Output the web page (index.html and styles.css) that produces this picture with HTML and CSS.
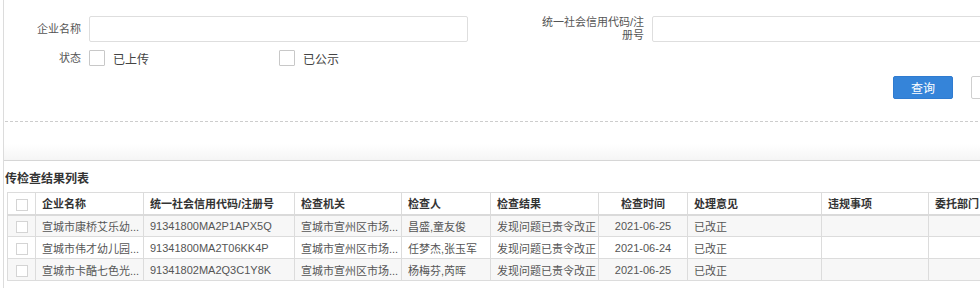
FILE: index.html
```html
<!DOCTYPE html>
<html lang="zh-CN">
  <head>
    <meta charset="UTF-8" />
    <title>检查结果列表</title>
    <link rel="stylesheet" href="styles.css">
  </head>
  <body>
    <div class="page">
      <div class="search-panel">
        <div class="form-grid">
          <label class="form-label">企业名称</label>
          <input class="form-input" type="text" />
          <span></span>
          <label class="form-label two-line">统一社会信用代码/注册号</label>
          <input class="form-input" type="text" />

          <label class="form-label">状态</label>
          <div class="check-group">
            <span class="check-item"><i class="check-box"></i>已上传</span>
            <span class="check-item"><i class="check-box"></i>已公示</span>
          </div>
        </div>

        <div class="toolbar">
          <button class="btn btn-primary">查询</button>
          <button class="btn" aria-label="重置"></button>
        </div>

        <div class="dashed"></div>
      </div>

      <div class="list-title">传检查结果列表</div>

      <div class="table-wrap">
        <table class="grid">
          <colgroup>
            <col style="width:28px">
            <col style="width:108px">
            <col style="width:151px">
            <col style="width:107px">
            <col style="width:89px">
            <col style="width:108px">
            <col style="width:89px">
            <col style="width:134px">
            <col style="width:107px">
            <col style="width:108px">
          </colgroup>
          <thead>
            <tr>
              <th class="cb"><i class="row-check"></i></th>
              <th>企业名称</th>
              <th>统一社会信用代码/注册号</th>
              <th>检查机关</th>
              <th>检查人</th>
              <th>检查结果</th>
              <th class="center">检查时间</th>
              <th>处理意见</th>
              <th>违规事项</th>
              <th>委托部门</th>
            </tr>
          </thead>
          <tbody>
            <tr class="odd">
              <td class="cb"><i class="row-check"></i></td>
              <td>宣城市康桥艾乐幼...</td>
              <td>91341800MA2P1APX5Q</td>
              <td>宣城市宣州区市场...</td>
              <td>昌盛,童友俊</td>
              <td>发现问题已责令改正</td>
              <td class="center">2021-06-25</td>
              <td>已改正</td>
              <td></td>
              <td></td>
            </tr>
            <tr>
              <td class="cb"><i class="row-check"></i></td>
              <td>宣城市伟才幼儿园...</td>
              <td>91341800MA2T06KK4P</td>
              <td>宣城市宣州区市场...</td>
              <td>任梦杰,张玉军</td>
              <td>发现问题已责令改正</td>
              <td class="center">2021-06-24</td>
              <td>已改正</td>
              <td></td>
              <td></td>
            </tr>
            <tr class="odd">
              <td class="cb"><i class="row-check"></i></td>
              <td>宣城市卡酷七色光...</td>
              <td>91341802MA2Q3C1Y8K</td>
              <td>宣城市宣州区市场...</td>
              <td>杨梅芬,芮晖</td>
              <td>发现问题已责令改正</td>
              <td class="center">2021-06-25</td>
              <td>已改正</td>
              <td></td>
              <td></td>
            </tr>
          </tbody>
        </table>
      </div>
    </div>
  </body>
</html>
```

FILE: styles.css
```css
* {
  margin: 0;
  padding: 0;
  box-sizing: border-box;
  font-family: "Liberation Sans", "Noto Sans CJK SC", sans-serif;
}
body {
  background: #fff;
  overflow: hidden;
  font-size: 11px;
  color: #555;
}

.page {
  width: 1100px;
  min-height: 288px;
  margin-left: 3px;
  border-left: 1px solid #dcdcdc;
}

.search-panel {
  height: 161px;
  padding-top: 16px;
  border-bottom: 1px solid #d6d6d6;
  background: linear-gradient(to bottom, #fff 0%, #fff 90%, #f5f5f5 100%);
}

.form-grid {
  display: grid;
  grid-template-columns: 77px 379px 50px 110px 340px;
  column-gap: 8px;
  row-gap: 8px;
  align-items: center;
}
.form-label {
  text-align: right;
  color: #555;
  line-height: 13px;
}
.form-input {
  height: 26px;
  border: 1px solid #dedede;
  border-radius: 2px;
  outline: none;
  background: #fff;
}
.check-group {
  grid-column: 2 / 6;
  display: flex;
  height: 16px;
}
.check-item {
  width: 190px;
  display: flex;
  align-items: center;
  gap: 8px;
  font-size: 12px;
  color: #444;
}
.check-box {
  width: 16px;
  height: 16px;
  border: 1px solid #c8c8c8;
  border-radius: 1px;
  background: #fff;
}

.toolbar {
  display: flex;
  justify-content: flex-end;
  gap: 18px;
  padding-right: 72px;
  margin-top: 10px;
}
.btn {
  width: 60px;
  height: 23px;
  border: 1px solid #cfcfcf;
  border-radius: 2px;
  background: #fff;
  color: #444;
  font-size: 12px;
}
.btn-primary {
  background: #3584d9;
  border-color: #2f7bd0;
  color: #fff;
}

.dashed {
  margin-top: 22px;
  margin-left: 1px;
  border-top: 1px dashed #cdcdcd;
}

.list-title {
  padding: 8px 0 0 1px;
  height: 31px;
  font-size: 12px;
  font-weight: bold;
  color: #333;
}

.table-wrap {
  margin-left: 3px;
}
.grid {
  table-layout: fixed;
  border-collapse: collapse;
  width: 1029px;
}
.grid th,
.grid td {
  height: 22px;
  padding: 0 6px;
  border: 1px solid #dcdcdc;
  text-align: left;
  white-space: nowrap;
  overflow: hidden;
}
.grid th {
  color: #333;
  font-weight: bold;
  background: #fff;
  border-bottom: 2px solid #dadada;
}
.grid td {
  color: #555;
  background: #fff;
}
.grid tr.odd td {
  background: #f7f7f7;
}
.grid .center {
  text-align: center;
}
.grid .cb {
  padding: 0;
  text-align: center;
}
.row-check {
  display: inline-block;
  width: 12px;
  height: 12px;
  margin-top: 3px;
  border: 1px solid #d4d4d4;
  background: #fff;
  vertical-align: top;
}
```
